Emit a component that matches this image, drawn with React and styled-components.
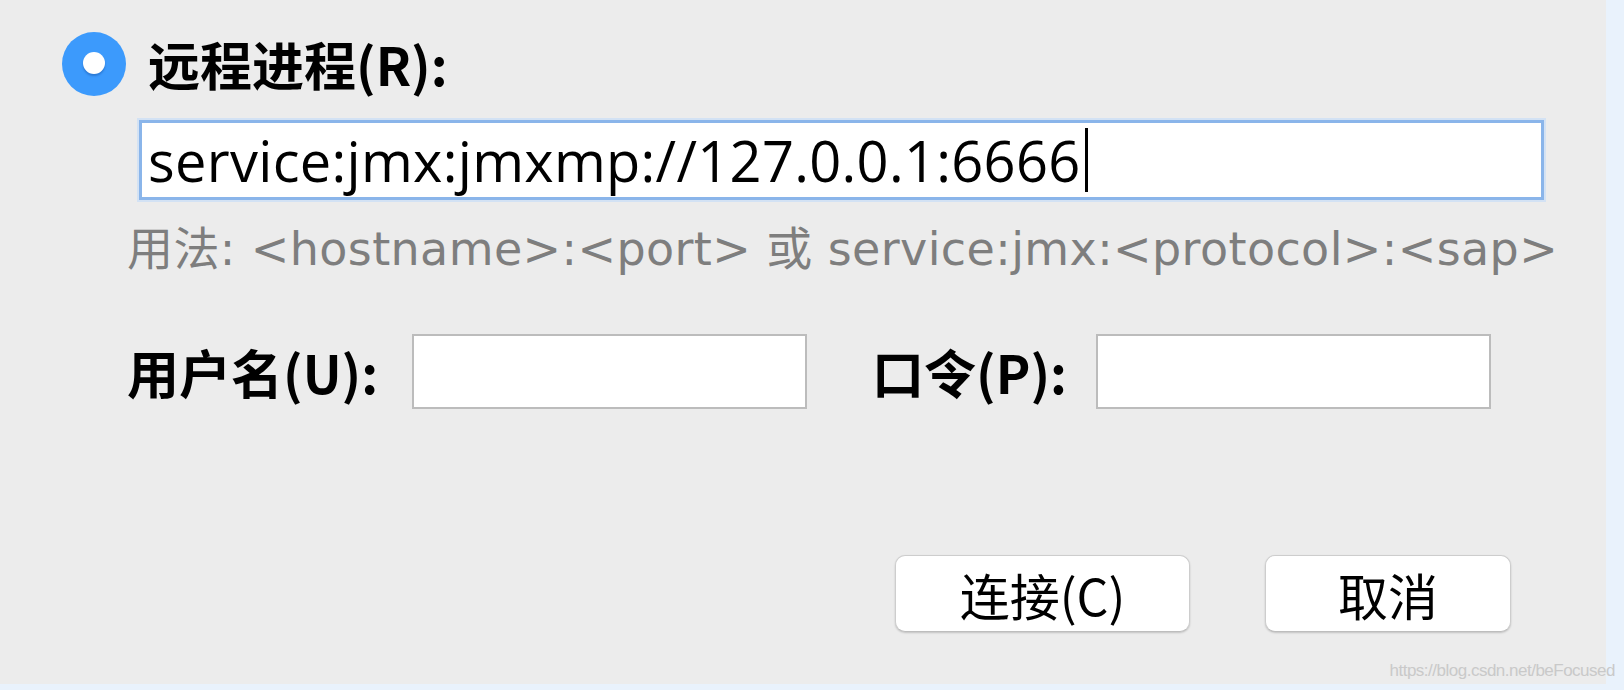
import React from 'react'
import styled, { createGlobalStyle } from 'styled-components'

const GlobalStyle = createGlobalStyle`
  html, body {
    margin: 0;
    padding: 0;
    background: #e9f2fc;
  }
`

const Frame = styled.div`
  position: relative;
  width: 1624px;
  height: 690px;
  background: #e9f2fc;
  overflow: hidden;
`

const Panel = styled.div`
  width: 1606px;
  height: 684px;
  background: #ececec;
  display: flex;
  flex-direction: column;
  font-family: "Noto Sans CJK SC", sans-serif;
  color: #000;
`

const RadioRow = styled.div`
  display: flex;
  align-items: center;
  gap: 22px;
  margin: 32px 0 0 62px;
  height: 64px;
`

const Radio = styled.div`
  position: relative;
  width: 64px;
  height: 64px;
  border-radius: 50%;
  background: #3c9afc;
  flex-shrink: 0;

  &::after {
    content: '';
    position: absolute;
    left: 21px;
    top: 20px;
    width: 22px;
    height: 22px;
    border-radius: 50%;
    background: #fff;
    box-shadow: 0 2px 2px rgba(10, 60, 140, 0.35);
  }
`

const Label = styled.span`
  font-family: "Noto Sans CJK SC", sans-serif;
  font-weight: 700;
  font-size: ${p => p.size || 52}px;
  line-height: 64px;
  white-space: nowrap;
`

const UrlField = styled.div`
  box-sizing: border-box;
  margin: 24px 0 0 139px;
  width: 1405px;
  height: 80px;
  background: #fff;
  border: 3px solid #8ab5ea;
  box-shadow: 0 0 0 2px #d3e2f4;
  padding-left: 6px;
  display: flex;
  align-items: center;
  font-family: "Open Sans", sans-serif;
  font-size: 56px;
  letter-spacing: 0.3px;
  line-height: 74px;
  white-space: nowrap;
`

const Caret = styled.span`
  display: inline-block;
  width: 3px;
  height: 64px;
  margin-left: 4px;
  background: #000;
`

const Hint = styled.div`
  margin: 22px 0 0 127px;
  font-family: "DejaVu Sans", "Noto Sans CJK SC", sans-serif;
  font-size: 46px;
  letter-spacing: 0.4px;
  line-height: 54px;
  color: #7e7e7e;
  white-space: nowrap;
`

const CredRow = styled.div`
  display: flex;
  align-items: center;
  margin: 58px 0 0 127px;
  height: 75px;
`

const CredField = styled.div`
  box-sizing: border-box;
  width: 395px;
  height: 75px;
  margin-left: ${p => p.gap}px;
  background: #fff;
  border: 2px solid #bcbcbc;
`

const Spacer = styled.div`
  width: ${p => p.w}px;
`

const ButtonRow = styled.div`
  display: flex;
  justify-content: flex-end;
  gap: 75px;
  margin-top: 146px;
  padding-right: 95px;
`

const Button = styled.button`
  box-sizing: border-box;
  width: ${p => p.w}px;
  height: 77px;
  background: #fff;
  border: 1.5px solid #cdcdcd;
  border-bottom-color: #bdbdbd;
  border-radius: 10px;
  box-shadow: 0 1px 2px rgba(0, 0, 0, 0.18);
  font-family: "Noto Sans CJK SC", sans-serif;
  font-size: 50px;
  color: #000;
  padding: 0;
  display: flex;
  align-items: center;
  justify-content: center;
`

const Watermark = styled.div`
  position: absolute;
  right: 9px;
  bottom: 9px;
  font-family: "Liberation Sans", Arial, sans-serif;
  font-size: 17px;
  letter-spacing: -0.5px;
  color: #c9c9c9;
`

export default function App() {
  return (
    <Frame>
      <GlobalStyle />
      <Panel>
        <RadioRow>
          <Radio />
          <Label>远程进程(R):</Label>
        </RadioRow>
        <UrlField>
          service:jmx:jmxmp://127.0.0.1:6666
          <Caret />
        </UrlField>
        <Hint>用法: &lt;hostname&gt;:&lt;port&gt; 或 service:jmx:&lt;protocol&gt;:&lt;sap&gt;</Hint>
        <CredRow>
          <Label>用户名(U):</Label>
          <CredField gap={34} />
          <Spacer w={65} />
          <Label>口令(P):</Label>
          <CredField gap={29} />
        </CredRow>
        <ButtonRow>
          <Button w={295}>连接(C)</Button>
          <Button w={246}>取消</Button>
        </ButtonRow>
      </Panel>
      <Watermark>https://blog.csdn.net/beFocused</Watermark>
    </Frame>
  )
}
